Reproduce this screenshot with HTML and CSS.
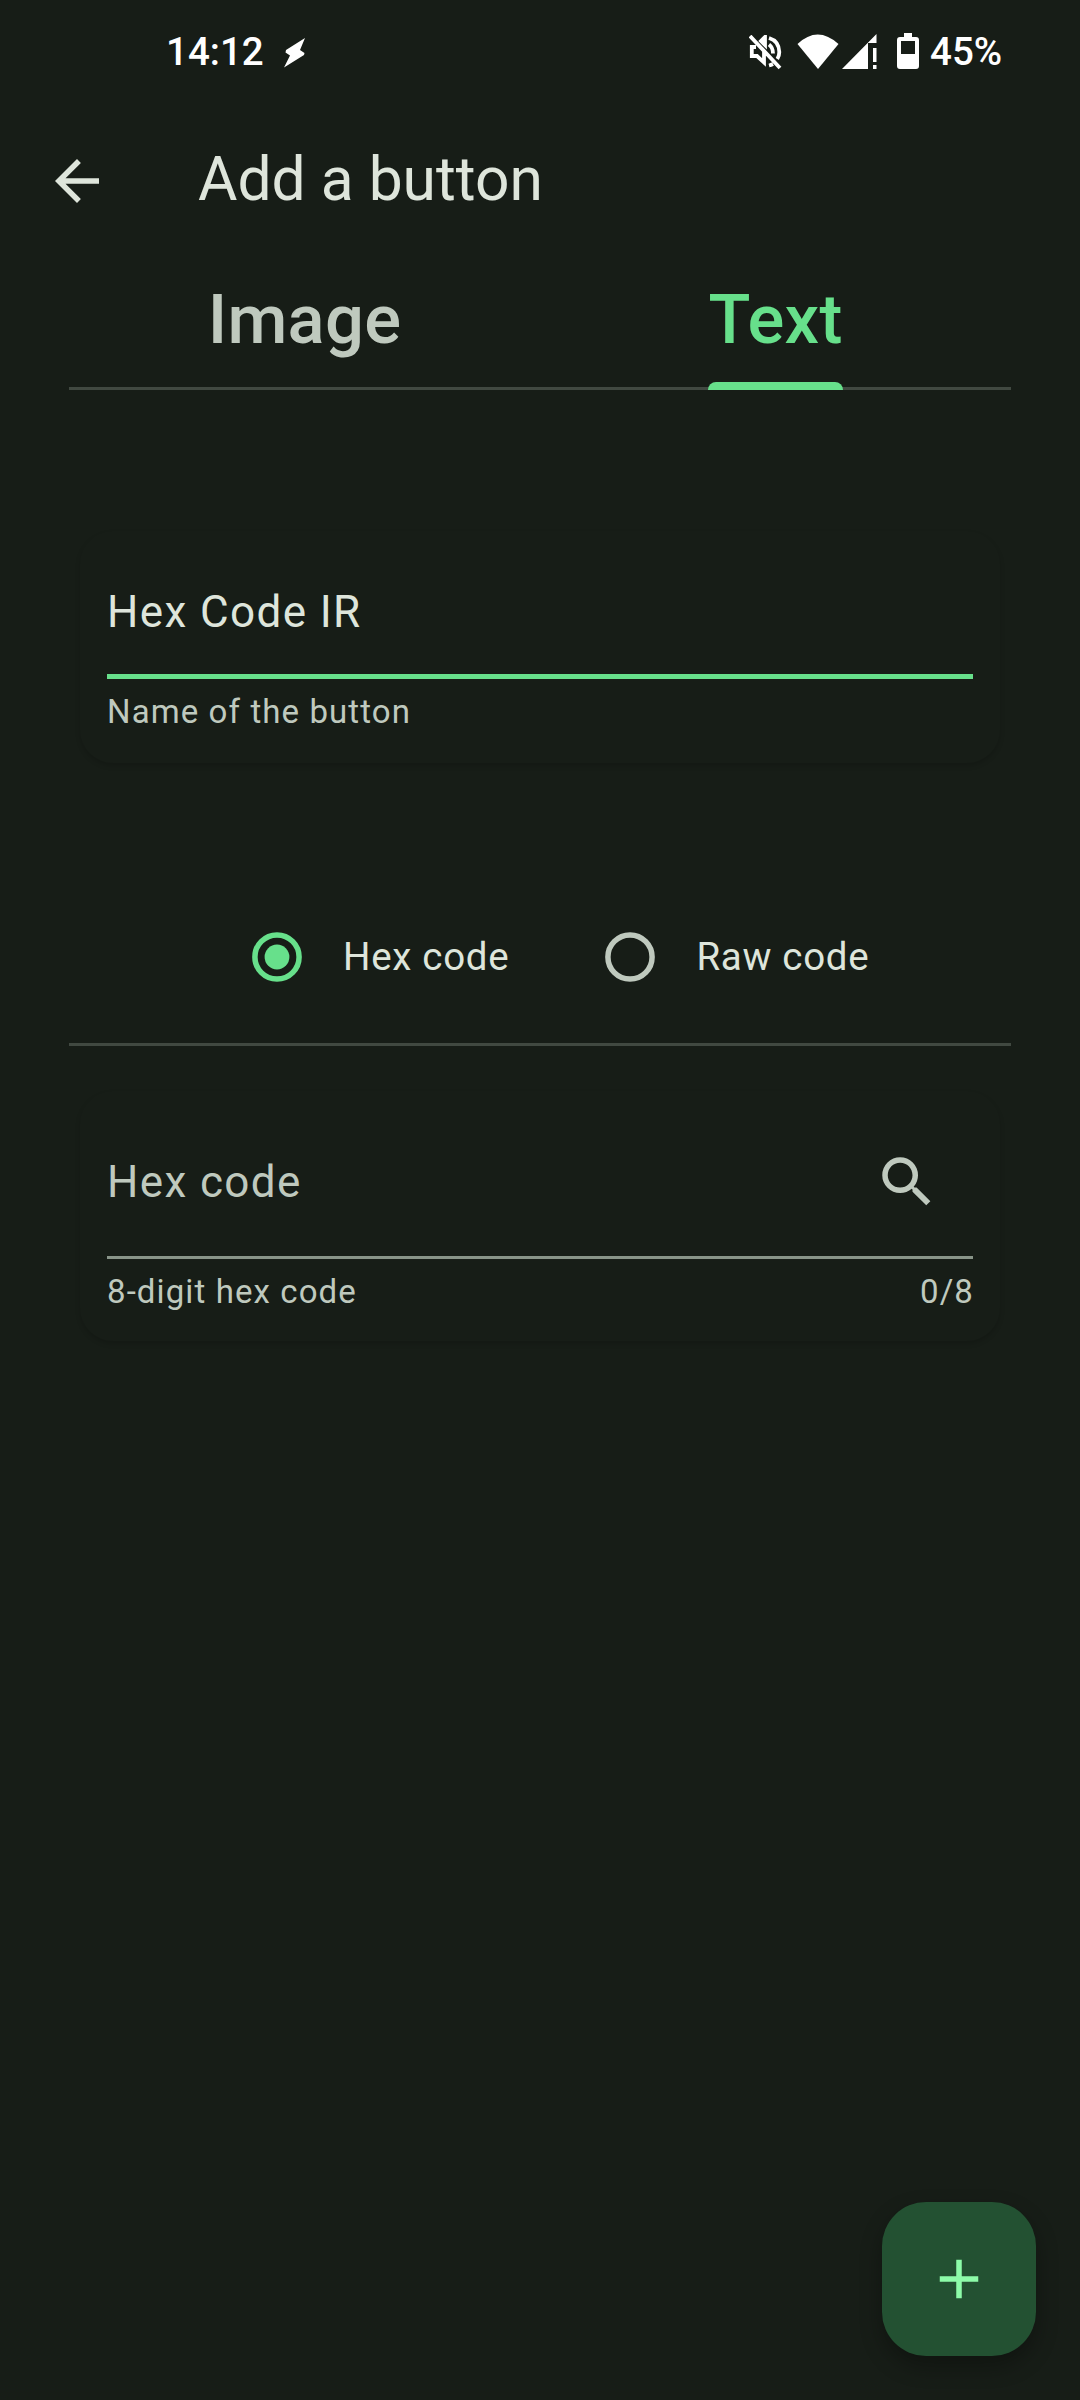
FILE: index.html
```html
<!DOCTYPE html>
<html lang="en">
<head>
<meta charset="utf-8">
<title>Add a button</title>
<link rel="stylesheet" href="styles.css">
</head>
<body>
<div class="screen">
  <div class="status-bar">
    <span class="clock">14:12</span>
    <svg class="bolt" width="22" height="30" viewBox="0 0 22 30"><path d="M21 0 2 12l-.5 2.500 4.500 3L0 29.500 20 17l.5-2-4.500-3z" fill="#fff"/></svg>
    <div class="status-icons">
      <svg class="muted" width="33" height="35" viewBox="0 0 33 35" fill="none" stroke="#fff" stroke-width="3.800"><path d="M7 12H2.800v9H8l7 6.500V15M16 2v8l-4-4zM20 9.500q4 3 4 9M20 3q10 3 10.300 14 0 4-2 7M20 30.500q2-.5 4-1.500M1 1l30 32"/></svg>
      <svg class="wifi" width="42" height="36" viewBox="0 0 42 36"><path d="M.5 10Q20.500-9 41.500 10L21 35z" fill="#fff"/></svg>
      <svg class="signal" width="35" height="35" viewBox="0 0 35 35" fill="#fff"><path d="M0 35 34.500 0v9H26v26zM31 14h3.500v14H31zM31 31h3.500v4H31z"/></svg>
      <svg class="battery" width="22" height="36" viewBox="0 0 22 36"><path d="M7 0h8v4h4q3 0 3 3v26q0 3-3 3H3q-3 0-3-3V7q0-3 3-3h4zM4 8v13h14V8z" fill="#fff" fill-rule="evenodd"/></svg>
    </div>
    <span class="percent">45%</span>
  </div>

  <header class="app-bar">
    <svg class="back" width="66" height="66" viewBox="0 0 24 24"><path d="M20 11H7.830l5.590-5.590L12 4l-8 8 8 8 1.410-1.410L7.830 13H20z" fill="currentColor"/></svg>
    <h1 class="title">Add a button</h1>
  </header>

  <nav class="tabs">
    <div class="tab"><span class="tab-label">Image</span></div>
    <div class="tab active"><span class="tab-label">Text</span></div>
  </nav>

  <section class="card name-card">
    <div class="field focused"><span class="value">Hex Code IR</span></div>
    <div class="helper"><span>Name of the button</span></div>
  </section>

  <div class="radios">
    <div class="radio checked">
      <svg width="50" height="50" viewBox="0 0 50 50"><circle class="ring" cx="25" cy="25" r="22.100"/><circle class="dot" cx="25" cy="25" r="12.400"/></svg>
      <span>Hex code</span>
    </div>
    <div class="radio">
      <svg width="50" height="50" viewBox="0 0 50 50"><circle class="ring" cx="25" cy="25" r="22.100"/></svg>
      <span>Raw code</span>
    </div>
  </div>

  <section class="card code-card">
    <div class="field">
      <span class="value">Hex code</span>
      <svg width="66" height="66" viewBox="0 0 24 24"><path d="M15.500 14h-.79l-.28-.27A6.471 6.471 0 0 0 16 9.500 6.500 6.500 0 1 0 9.500 16c1.610 0 3.090-.59 4.230-1.570l.27.28v.79l5 4.990L20.490 19zm-6 0C7.010 14 5 11.990 5 9.500S7.010 5 9.500 5 14 7.010 14 9.500 11.990 14 9.500 14z" fill="currentColor"/></svg>
    </div>
    <div class="helper"><span>8-digit hex code</span><span class="counter">0/8</span></div>
  </section>

  <div class="fab">
    <svg width="66" height="66" viewBox="0 0 24 24"><path d="M19 13h-6v6h-2v-6H5v-2h6V5h2v6h6z" fill="currentColor"/></svg>
  </div>
</div>
</body>
</html>
```
FILE: styles.css
```css
* { box-sizing: border-box; }

body {
  margin: 0;
  background: #171d17;
  color: #dee5db;
  font-family: Roboto, sans-serif;
}

svg { display: block; flex: none; }

.screen {
  width: 1080px;
  height: 2400px;
  display: flex;
  flex-direction: column;
}

.status-bar {
  display: flex;
  height: 104px;
  padding: 0 78px 0 166px;
  color: #fff;
  font-size: 38.5px;
  font-weight: 500;
  line-height: 46px;
}

.clock { margin-top: 29px; width: 118px; }
.bolt { margin-top: 38px; }
.status-icons { display: flex; margin-left: auto; }
.muted { margin: 35px 15px 0 0; }
.wifi { margin: 34px 3px 0 0; }
.signal { margin: 34px 20px 0 0; }
.battery { margin: 33px 11px 0 0; }
.percent { margin-top: 29px; width: 72px; white-space: nowrap; }

.app-bar {
  display: flex;
  align-items: center;
  height: 154px;
  padding-left: 44px;
}

.title {
  margin: 0 0 2px 88px;
  font-size: 60.5px;
  font-weight: 400;
  line-height: 76px;
}

.tabs {
  display: flex;
  height: 132px;
  margin: 0 69px;
  border-bottom: 3px solid #414941;
  color: #bfc9be;
  font-size: 68.75px;
  font-weight: 500;
  letter-spacing: .3px;
  line-height: 80px;
}

.tab {
  flex: 1;
  height: 132px;
  display: flex;
  justify-content: center;
  padding-top: 22px;
}

.active .tab-label {
  display: flex;
  flex-direction: column;
  justify-content: space-between;
  height: 110px;
  color: #67e08b;
}

.active .tab-label::after {
  content: "";
  height: 8.500px;
  border-radius: 8.250px 8.250px 0 0;
  background: #67e08b;
}

.card {
  margin: 0 80px;
  padding: 0 27px;
  border-radius: 33px;
  box-shadow: 0 3px 5px rgba(0, 0, 0, .15);
}

.name-card { height: 232px; margin-top: 141px; }
.code-card { height: 250px; margin-top: 45px; }

.field {
  display: flex;
  align-items: center;
  justify-content: space-between;
  font-size: 44px;
  letter-spacing: 1.375px;
  line-height: 52px;
  color: #bfc9be;
  border-bottom: 3px solid #889488;
}

.focused {
  color: #dee5db;
  border-bottom: 5px solid #67e08b;
}

.helper {
  display: flex;
  justify-content: space-between;
  padding-top: 11px;
  color: #bfc9be;
  font-size: 33px;
  letter-spacing: 1.1px;
  line-height: 44px;
}

.counter { margin-right: -1px; }

.name-card .field { height: 148px; padding-top: 19px; }
.code-card .field { height: 168px; padding: 16px 33px 0 0; }

.radios {
  display: flex;
  gap: 96px;
  height: 283px;
  margin: 0 69px;
  padding: 169px 0 0 183px;
  border-bottom: 3px solid #414941;
  font-size: 38.5px;
  letter-spacing: .7px;
  line-height: 50px;
}

.radio { display: flex; gap: 41px; height: 50px; }

.ring { fill: none; stroke: #bfc9be; stroke-width: 5.500px; }
.checked .ring { stroke: #67e08b; }
.dot { fill: #67e08b; }

.fab {
  display: grid;
  place-items: center;
  width: 154px;
  height: 154px;
  margin: auto 44px 44px auto;
  border-radius: 44px;
  background: #235132;
  color: #8dfba9;
  box-shadow: 0 10px 22px rgba(0, 0, 0, .3);
}
```
